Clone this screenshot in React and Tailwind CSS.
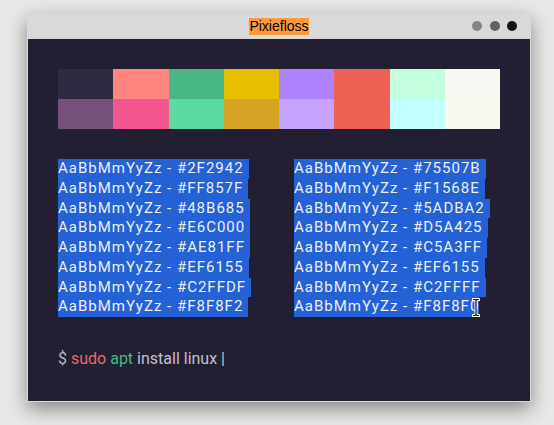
import React from "react";

const swatchTop = ["#2F2942", "#FF857F", "#48B685", "#E6C000", "#AE81FF", "#EF6155", "#C2FFDF", "#F8F8F2"];
const swatchBottom = ["#75507B", "#F1568E", "#5ADBA2", "#D5A425", "#C5A3FF", "#EF6155", "#C2FFFF", "#F8F8F0"];

const leftList = ["#2F2942", "#FF857F", "#48B685", "#E6C000", "#AE81FF", "#EF6155", "#C2FFDF", "#F8F8F2"];
const rightList = ["#75507B", "#F1568E", "#5ADBA2", "#D5A425", "#C5A3FF", "#EF6155", "#C2FFFF", "#F8F8F0"];

function SampleRow({ hex, last }) {
    return (
        <div className={`w-fit bg-[#2461d4] text-[#eceff7] h-[19.75px] leading-[19.75px] ${last ? "" : "pr-[5px]"}`}>
            AaBbMmYyZz - {hex}
        </div>
    );
}

// curseur texte au-dessus de la sélection
const IBeam = () => (
    <svg width="8" height="19" viewBox="0 0 8 19" className="absolute left-[-8px] top-[1px]">
        <path d="M1 1.5h2.2L4 2.3l.8-.8H7M1 17.5h2.2l.8-.8.8.8H7M4 2.3v14.4" fill="none" stroke="#fff" strokeWidth="3" strokeLinecap="round" />
        <path d="M1 1.5h2.2L4 2.3l.8-.8H7M1 17.5h2.2l.8-.8.8.8H7M4 2.3v14.4" fill="none" stroke="#111" strokeWidth="1.2" />
    </svg>
);

export default function App() {
    return (
        <div className="min-h-[425px] bg-[#e8e8e8] pt-[13px] pl-[27px]">
            <div className="w-[504px] bg-[#d9d9d9] px-px pb-px shadow-[0_7px_18px_rgba(0,0,0,0.42)]">
                {/* barre de titre */}
                <div className="grid grid-cols-[1fr_auto_1fr] items-center h-[26px]">
                    <div />
                    <span className="bg-[#fe9a3e] text-black text-[14px] leading-[17px] font-['Liberation_Sans',Arial,sans-serif]">
                        Pixiefloss
                    </span>
                    <div className="flex justify-end gap-[7.5px] pr-[13px]">
                        <span className="w-[10px] h-[10px] rounded-full bg-[#858585]" />
                        <span className="w-[10px] h-[10px] rounded-full bg-[#626262]" />
                        <span className="w-[10px] h-[10px] rounded-full bg-[#141414]" />
                    </div>
                </div>

                <div className="bg-[#231f33] p-[30px] font-['Roboto',sans-serif]">
                    {/* palette */}
                    <div className="grid grid-cols-8">
                        {swatchTop.map((c, i) => (
                            <div key={"t" + i} className="h-[30px]" style={{ backgroundColor: c }} />
                        ))}
                        {swatchBottom.map((c, i) => (
                            <div key={"b" + i} className="h-[30px]" style={{ backgroundColor: c }} />
                        ))}
                    </div>

                    {/* échantillons */}
                    <div className="grid grid-cols-2 gap-x-[30px] mt-[30px] text-[15px] tracking-[1px]">
                        <div className="flex flex-col">
                            {leftList.map((h) => (
                                <SampleRow key={h} hex={h} />
                            ))}
                        </div>
                        <div className="flex flex-col">
                            {rightList.map((h, i) => (
                                <div key={h} className="relative w-fit">
                                    <SampleRow hex={h} last={i === rightList.length - 1} />
                                    {i === rightList.length - 1 && (
                                        <div className="absolute right-[-1px] top-0">
                                            <IBeam />
                                        </div>
                                    )}
                                </div>
                            ))}
                        </div>
                    </div>

                    {/* ligne de commande */}
                    <div className="mt-[30px] text-[16px] leading-[24px] text-[#c2bfd2]">
                        <span className="text-[#b9b6c9]">$</span>{" "}
                        <span className="text-[#e66a68]">sudo</span>{" "}
                        <span className="text-[#48b685]">apt</span> install linux |
                    </div>
                </div>
            </div>
        </div>
    );
}
